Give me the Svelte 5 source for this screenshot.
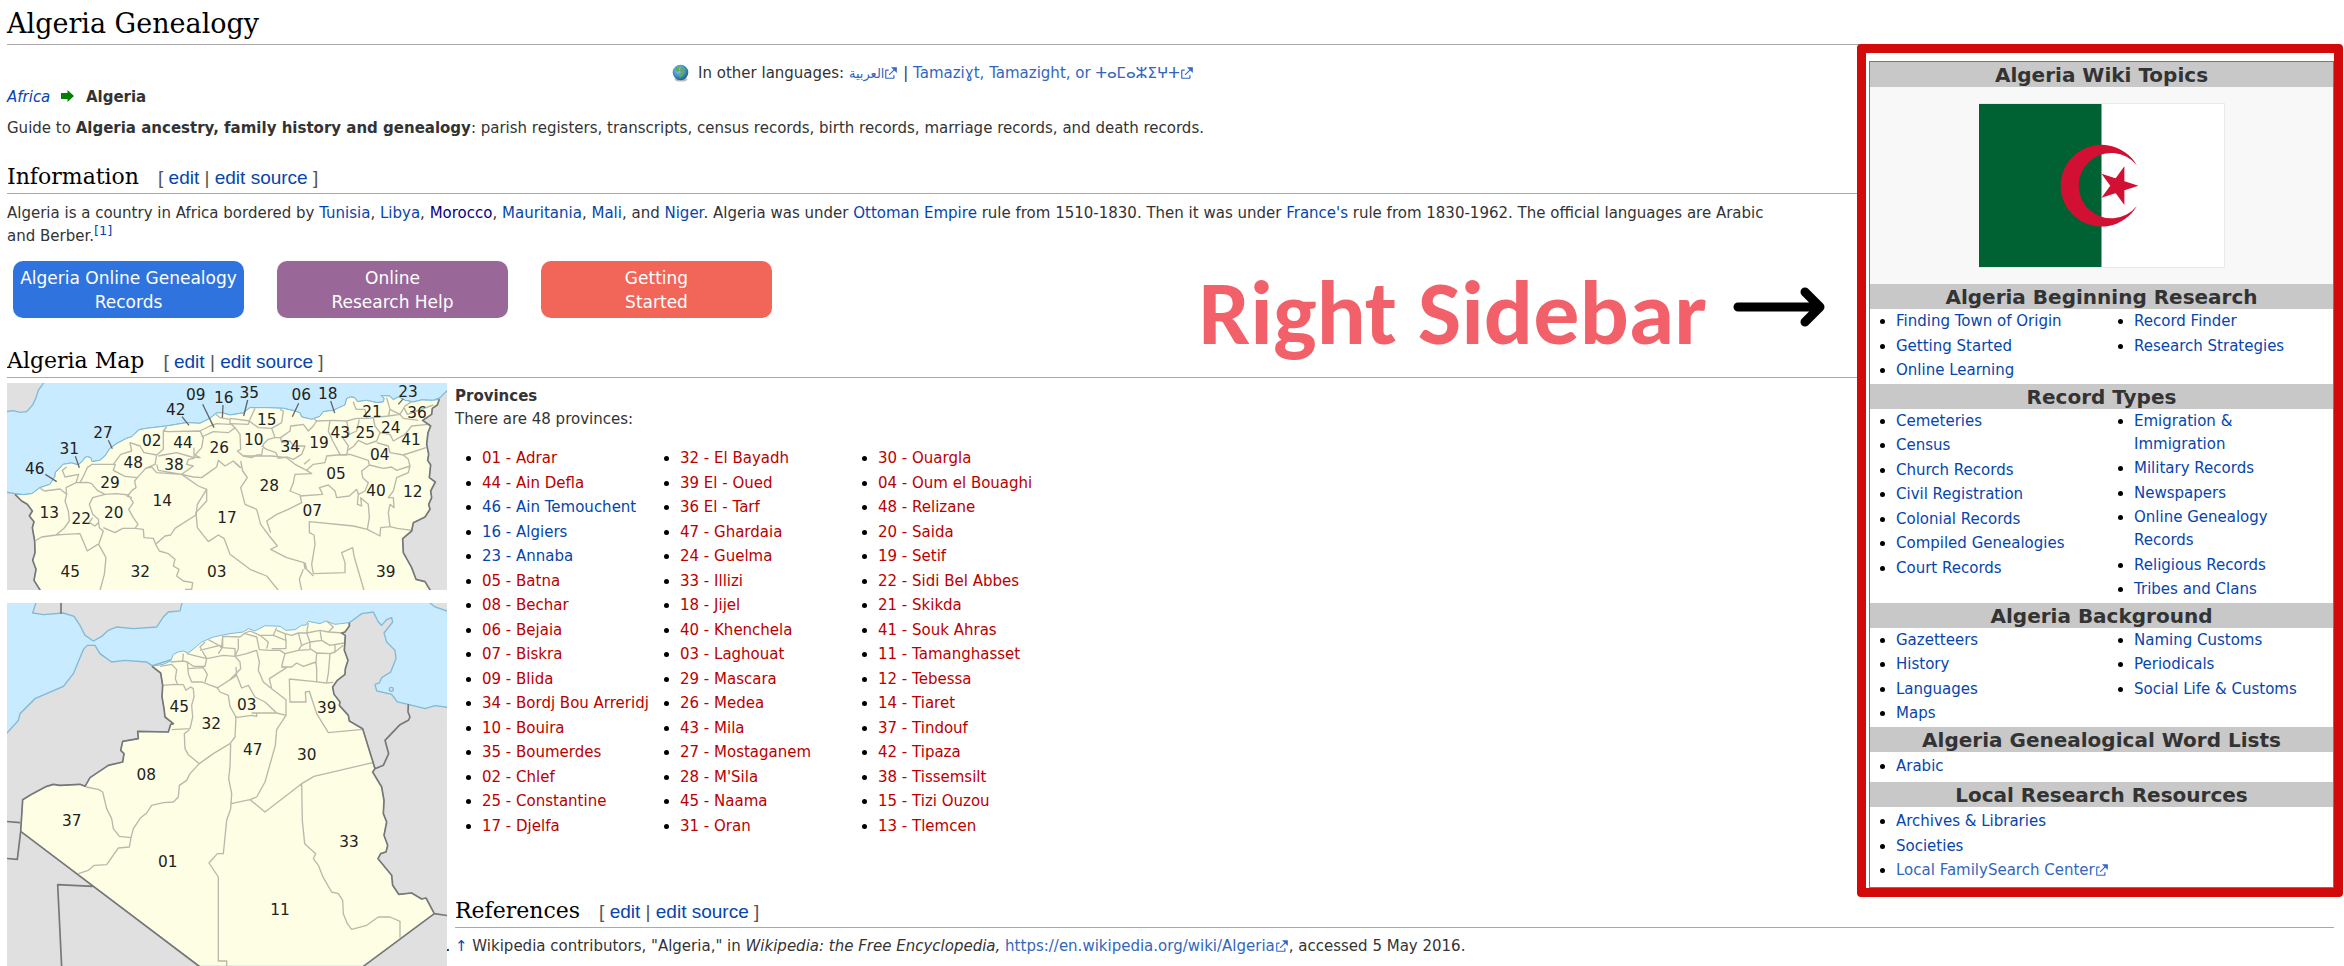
<script lang="ts">
  type Item = { label: string; external?: boolean };
  type Topic = { title: string; columns: Item[][] };

  const items = (...labels: string[]): Item[] => labels.map((label) => ({ label }));

  const topics: Topic[] = [
    {
      title: 'Algeria Beginning Research',
      columns: [
        items('Finding Town of Origin', 'Getting Started', 'Online Learning'),
        items('Record Finder', 'Research Strategies')
      ]
    },
    {
      title: 'Record Types',
      columns: [
        items('Cemeteries', 'Census', 'Church Records', 'Civil Registration', 'Colonial Records', 'Compiled Genealogies', 'Court Records'),
        items('Emigration & Immigration', 'Military Records', 'Newspapers', 'Online Genealogy Records', 'Religious Records', 'Tribes and Clans')
      ]
    },
    {
      title: 'Algeria Background',
      columns: [
        items('Gazetteers', 'History', 'Languages', 'Maps'),
        items('Naming Customs', 'Periodicals', 'Social Life & Customs')
      ]
    },
    { title: 'Algeria Genealogical Word Lists', columns: [items('Arabic')] },
    {
      title: 'Local Research Resources',
      columns: [[...items('Archives & Libraries', 'Societies'), { label: 'Local FamilySearch Center', external: true }]]
    }
  ];

  const provinces = [
    ['01 - Adrar', '44 - Ain Defla', '46 - Ain Temouchent', '16 - Algiers', '23 - Annaba', '05 - Batna', '08 - Bechar', '06 - Bejaia', '07 - Biskra', '09 - Blida', '34 - Bordj Bou Arreridj', '10 - Bouira', '35 - Boumerdes', '02 - Chlef', '25 - Constantine', '17 - Djelfa'],
    ['32 - El Bayadh', '39 El - Oued', '36 El - Tarf', '47 - Ghardaia', '24 - Guelma', '33 - Illizi', '18 - Jijel', '40 - Khenchela', '03 - Laghouat', '29 - Mascara', '26 - Medea', '43 - Mila', '27 - Mostaganem', "28 - M'Sila", '45 - Naama', '31 - Oran'],
    ['30 - Ouargla', '04 - Oum el Bouaghi', '48 - Relizane', '20 - Saida', '19 - Setif', '22 - Sidi Bel Abbes', '21 - Skikda', '41 - Souk Ahras', '11 - Tamanghasset', '12 - Tebessa', '14 - Tiaret', '37 - Tindouf', '42 - Tipaza', '38 - Tissemsilt', '15 - Tizi Ouzou', '13 - Tlemcen']
  ];

  // provinces that already have a page
  const existing = ['46 - Ain Temouchent', '16 - Algiers', '23 - Annaba'];

  type Mark = [string, number, number];

  const northLabels: Mark[] = [
    ['09', 587, 207], ['16', 671, 215], ['35', 748, 200], ['06', 904, 208], ['18', 983, 203], ['23', 1224, 197],
    ['42', 527, 252], ['15', 800, 281], ['21', 1116, 259], ['36', 1251, 260], ['27', 309, 320], ['02', 455, 345],
    ['44', 549, 351], ['26', 658, 367], ['10', 761, 343], ['34', 871, 363], ['19', 957, 351], ['43', 1021, 320],
    ['25', 1096, 322], ['24', 1172, 306], ['41', 1233, 342], ['04', 1139, 388], ['31', 208, 368], ['46', 104, 430],
    ['48', 400, 412], ['38', 522, 417], ['29', 330, 472], ['05', 1008, 443], ['28', 808, 480], ['40', 1128, 495],
    ['12', 1238, 498], ['14', 487, 526], ['13', 148, 562], ['22', 244, 580], ['20', 341, 560], ['07', 937, 554],
    ['17', 681, 575], ['45', 211, 737], ['32', 421, 737], ['03', 650, 737], ['39', 1157, 737]
  ];

  const southLabels: Mark[] = [
    ['45', 538, 364], ['03', 740, 358], ['39', 980, 368], ['32', 634, 415], ['47', 758, 495], ['30', 920, 508],
    ['08', 439, 570], ['37', 215, 708], ['33', 1047, 770], ['01', 503, 830], ['11', 840, 975]
  ];
</script>

{#snippet externalIcon()}
  <svg class="external-icon" viewBox="0 0 12 12" aria-hidden="true">
    <path d="M6 1h5v5L8.86 3.85 4.7 8 4 7.3l4.15-4.16zM2 3h2v1H2v6h6V8h1v2a1 1 0 0 1-1 1H2a1 1 0 0 1-1-1V4a1 1 0 0 1 1-1" />
  </svg>
{/snippet}

{#snippet sectionHeading(title: string)}
  <h2>
    {title}
    <span class="edit">[ <a href="#edit">edit</a> | <a href="#source">edit source</a> ]</span>
  </h2>
{/snippet}

{#snippet topicLists(topic: Topic)}
  <h3>{topic.title}</h3>
  <div class="topic-lists" class:two={topic.columns.length > 1}>
    {#each topic.columns as column}
      <ul>
        {#each column as item}
          <li>
            <a href="#topic" class:external={item.external}>{item.label}{#if item.external}{@render externalIcon()}{/if}</a>
          </li>
        {/each}
      </ul>
    {/each}
  </div>
{/snippet}

<div class="page">
  <h1>Algeria Genealogy</h1>

  <aside>
    <h3>Algeria Wiki Topics</h3>
    <div class="flag">
      <svg viewBox="0 0 900 600" role="img" aria-label="Flag of Algeria">
        <path fill="#fff" d="M0 0h900v600H0z" />
        <path fill="#006233" d="M0 0h450v600H0z" />
        <path fill="#d21034" d="M579.9 225a150 150 0 1 0 0 150 120 120 0 1 1 0-150M585.6 300 450 255.9 534 371.1V228.9L450 344.1z" />
      </svg>
    </div>
    {#each topics as topic}
      {@render topicLists(topic)}
    {/each}
    <div class="highlight"></div>
  </aside>

  <p class="languages">
    <svg class="globe" viewBox="0 0 17 18" aria-hidden="true">
      <defs>
        <radialGradient id="sea" cx="0.4" cy="0.35" r="0.7">
          <stop offset="0" stop-color="#8fd0ee" />
          <stop offset="0.6" stop-color="#3b8fc0" />
          <stop offset="1" stop-color="#23566f" />
        </radialGradient>
      </defs>
      <ellipse cx="9" cy="15.5" rx="6.5" ry="2" fill="#bbb" />
      <circle cx="8.5" cy="8.5" r="7.8" fill="url(#sea)" />
      <path fill="#62a868" d="M3 5c1-2 3-3 5-3l-1 3 1 2-3 1zM9 3l3 1 1 3-2 4-3 3-1-3 2-2-1-3z" />
    </svg>
    In other languages:
    <a href="#ar" class="external arabic"><bdi>العربية</bdi>{@render externalIcon()}</a>
    |
    <a href="#ber" class="external">Tamaziɣt, Tamazight, or ⵜⴰⵎⴰⵣⵉⵖⵜ{@render externalIcon()}</a>
  </p>

  <p class="crumbs">
    <a href="#africa"><i>Africa</i></a>
    <svg viewBox="0 0 13 12" aria-hidden="true"><path fill="#008000" d="M0 3h6.500V0L13 6l-6.500 6V9H0z" /></svg>
    <b>Algeria</b>
  </p>

  <p class="guide">
    Guide to <b>Algeria ancestry, family history and genealogy</b>: parish registers, transcripts, census records, birth
    records, marriage records, and death records.
  </p>

  {@render sectionHeading('Information')}
  <p class="intro">
    Algeria is a country in Africa bordered by <a href="#tn">Tunisia</a>, <a href="#ly">Libya</a>,
    <a href="#ma" class="visited">Morocco</a>, <a href="#mr">Mauritania</a>, <a href="#ml">Mali</a>, and
    <a href="#ne">Niger</a>. Algeria was under <a href="#ottoman">Ottoman Empire</a> rule from 1510-1830. Then it was
    under <a href="#fr">France's</a> rule from 1830-1962. The official languages are Arabic and Berber.<sup><a href="#cite">[1]</a></sup>
  </p>

  <div class="buttons">
    <button class="blue">Algeria Online Genealogy Records</button>
    <button class="purple">Online<br />Research Help</button>
    <button class="coral">Getting<br />Started</button>
  </div>

  {@render sectionHeading('Algeria Map')}

  <div class="maps">
    <svg viewBox="21 156 1320 622" role="img" aria-label="Northern provinces of Algeria">
      <path class="land" d="M10 145h1350v650H10z" />
      <path
        class="sea"
        d="M135 150 115 178 108 200 98 222 80 242 60 244 40 239 10 243V482L45 488 70 491 96 488 120 470 150 460 165 436 166 425 190 400 215 396 235 402 250 388 254 380 262 377 272 380 276 392 300 388 315 375 330 352 350 338 380 322 395 317 418 296 440 292 500 285 560 275 600 277 630 262 650 246 665 245 690 252 730 246 750 230 800 230 850 232 885 240 900 246 905 258 935 265 960 256 970 242 1000 238 1035 222 1040 203 1052 198 1064 200 1072 212 1100 208 1130 215 1150 213 1153 202 1145 194 1168 195 1180 206 1196 198 1215 208 1240 213 1265 207 1300 208 1320 200 1350 170V150Z"
      />
      <path
        class="algeria"
        d="M45 490 70 491 96 488 120 470 150 460 165 436 166 425 190 400 215 396 235 402 250 388 254 380 262 377 272 380 276 392 300 388 315 375 330 352 350 338 380 322 395 317 418 296 440 292 500 285 560 275 600 277 630 262 650 246 665 245 690 252 730 246 750 230 800 230 850 232 885 240 900 246 905 258 935 265 960 256 970 242 1000 238 1035 222 1040 203 1052 198 1064 200 1072 212 1100 208 1130 215 1150 213 1153 202 1145 194 1168 195 1180 206 1196 198 1215 208 1240 213 1265 207 1300 208 1318 205 1312 222 1297 232 1295 250 1268 268 1292 285 1284 305 1280 340 1286 370 1283 388 1292 402 1288 440 1306 453 1292 480 1295 500 1286 520 1290 535 1275 558 1240 575 1235 600 1208 623 1210 665 1235 710 1248 745 1275 752 1292 780H122L102 748 108 715 98 688 105 665 104 630 97 590 102 572 88 555 97 540 82 520 65 510Z"
      />
      <g class="province">
        <path d="M121 472 133 480 180 474 200 490 195 510 205 540 208 570 192 592 168 612 125 618 108 628M168 612 195 610 240 608 262 660 298 637M200 490 198 470 228 455 236 430 195 438 187 418 200 408M228 455 262 454 275 458 292 478 315 490 350 488 385 492 396 478 408 470 404 450 412 440 375 436 340 418 346 400 316 400 276 400 262 410 248 440 240 455M315 490 278 500 268 520 278 550 295 565 298 590 310 600 296 640 318 680 313 730 300 778M278 560 268 575 285 585 295 575" />
        <path d="M396 500 380 495M385 492 400 515 386 535 400 560 414 580 405 592 368 592 345 605 310 590M405 592 430 595 432 620 460 622 467 640 495 615 512 612 525 592 588 552 592 520 620 475 595 465 545 430 470 425 455 408 437 412 412 440M340 400 362 370 395 360 390 335 420 345 432 365 470 372 490 355 490 300 500 288M437 412 465 400 470 372 M490 300 505 302 600 300 610 320 605 350 585 372 600 380 575 378 530 365 490 372 475 375M470 400 475 418 545 430 580 438 605 440 630 422 650 408 655 388 675 405 700 390 722 410" />
        <path d="M545 430 580 405 560 400 565 385 582 382 582 350M600 300 630 285 650 278 690 280 690 265 660 260 648 250M605 318 640 302 685 305 705 290 720 310 722 355 712 360 730 375 755 380 770 372 785 372M705 290 692 278 745 280 750 265 765 232M690 262 750 270M750 272 775 290 815 292 845 275 850 240 840 235M815 292 825 320 805 325 790 340 785 372M825 320 842 320 870 300 872 285 898 282 910 280 925 300 940 285 950 270 940 262M842 320 845 335 870 330 880 345 915 345 905 370 880 385 862 378 835 382 828 365 800 355 785 345" />
        <path d="M722 390 728 420 742 440 722 470 735 520 770 535 782 580 808 615 832 645 812 655 860 680 912 695 915 715M705 395 722 410M620 475 620 510 588 545 592 590 625 632 655 612 672 622 690 670 750 715 800 735 835 778M467 640 478 660 505 668 525 685 520 705 537 715 530 735 550 750 578 755 575 775 555 775M728 375 780 375 815 375 860 380 885 400 920 418 935 428 885 430 880 455 870 480 900 492 905 515 865 535 830 550 800 570 812 605M950 270 1000 268 1040 270 1048 310 1028 320 1045 345 1040 372 1010 372 980 375 975 395 940 400 920 418M912 400 930 385M990 268 985 300 998 330 1020 370M1040 270 1070 262 1100 262 1095 235 1068 235 1060 212M1100 262 1165 255 1170 235 1160 200M1165 255 1200 250 1210 262 1255 268M1200 250 1215 225 1235 212M1170 235 1200 250M1212 230 1222 250 1300 222M1120 262 1125 285 1140 305 1130 330 1100 340 1075 328 1062 345 1040 360M1140 305 1170 310 1180 330 1215 310 1235 285 1285 280M1130 335 1165 345 1170 365 1210 372 1278 350M1048 310 1070 300 1078 265M1010 372 1050 370 1105 388 1108 402 1150 412 1175 408 1190 418 1230 405 1225 385 1210 372M1108 402 1085 420 1088 440 1105 455 1095 480 1075 490 1070 475 1048 495 1010 500 1005 480 985 462 958 470 968 490 900 495M1075 490 1072 520 1085 525 1082 500 1105 520 1108 560 1102 595 1140 615 1142 590 1170 587 1165 545 1170 520 1182 530 1180 500 1165 500 1180 480 1190 440 1225 425 1230 405M1170 587 1192 592 1235 598M1102 595 1060 585 928 572 928 605 942 612 945 640 935 700 940 728 1035 725 1035 695 1025 665 1058 650 1062 675 1092 778M915 695 920 715 940 735M910 715 898 745 905 778" />
      </g>
      <path class="border" d="M45 490 65 510 82 520 97 540 88 555 102 572 97 590 104 630 105 665 98 688 108 715 102 748 122 780M1318 205 1312 222 1297 232 1295 250 1268 268 1292 285 1284 305 1280 340 1286 370 1283 388 1292 402 1288 440 1306 453 1292 480 1295 500 1286 520 1290 535 1275 558 1240 575 1235 600 1208 623 1210 665 1235 710 1248 745 1275 752 1292 780" />
      <path class="leader" d="M608 220 642 290M669 222 667 260M743 207 731 255M896 217 877 257M992 210 1004 246M1210 203 1195 220M546 257 567 283M325 328 337 353M226 376 238 410M136 430 170 452" />
      {#each northLabels as [label, x, y]}
        <text {x} {y}>{label}</text>
      {/each}
    </svg>
    <svg viewBox="21 38 1320 1090" role="img" aria-label="Provinces of Algeria">
      <path class="sea" d="M10 28h1350v1120H10z" />
      <path class="land" d="M110 30 98 68 130 73 190 68 222 78 240 105 255 135 280 152 305 138 325 120 350 110 400 115 470 110 490 80 505 65 540 62 548 30ZM1280 30 1305 50 1350 65V30Z" />
      <path
        class="land"
        d="M10 440 55 390 60 370 105 325 190 288 220 250 250 178 262 165 285 165 300 190 335 215 375 210 440 215 456 226 700 150 1000 130 1048 97 1085 70 1120 65 1135 95 1145 105 1160 88 1175 82 1178 95 1152 128 1160 155 1185 180 1188 205 1172 245 1145 262 1138 278 1125 282 1130 302 1175 312 1192 335 1225 342 1275 355 1305 346 1350 352V1140H10Z"
      />
      <circle class="land" cx="1174" cy="297" r="6" />
      <path
        class="algeria"
        d="M456 228 490 222 512 212 520 192 535 185 550 182 565 188 590 168 605 155 640 140 690 130 730 125 745 115 765 122 795 106 840 108 858 120 885 118 905 105 918 104 925 93 960 100 978 92 1005 102 1048 97 1048 107 1035 125 1025 128 1036 135 1033 180 1044 210 1036 235 1035 252 1012 270 998 290 1002 312 1020 335 1018 345 1045 375 1048 392 1088 415 1125 535 1118 545 1145 590 1152 630 1150 670 1160 695 1152 735 1163 765 1158 785 1142 790 1134 805 1175 855 1178 885 1196 912 1235 908 1265 926 1278 923 1303 970 1090 1128H600L62 723 68 628 95 612 140 588 160 582 180 585 240 582 255 588 270 562 325 525 368 515 372 490 362 480 368 453 415 445 413 423 505 425 512 402 520 400 495 380 492 355 486 320 488 285 482 248Z"
      />
      <g class="province">
        <path d="M488 285 525 282 550 283 558 300 572 290 580 295 582 320 575 345 578 380 570 415 515 418M568 418 553 430 555 475 565 493 598 520 570 550 560 570 538 585 535 620 520 635 490 637 455 645 440 668 422 682 400 715 393 742 358 738 340 715 335 685 320 655 308 605 295 597 258 590M393 742 388 770 355 773 320 823 283 825 265 840 235 850M598 520 640 490 690 460 705 440 708 380 690 348 685 315 660 305 652 293 710 255M705 382 755 375 770 378 770 368 830 368 858 375 858 328 815 295M755 368 830 368 795 335 765 320 745 285 725 293 710 255 708 230M858 375 830 418 826 465 795 575 770 620 750 628 693 640M692 460 690 530 686 565 695 610 692 655 680 690 675 740 670 790 652 790 627 818 655 860 655 1112 680 1112 680 1128M750 628 795 665 905 580 942 558 1118 517M905 580 907 690 914 760 947 790 940 805 955 825 970 862 995 905 1015 910 1028 930 1030 970 1042 1000 1055 1017 1100 1005 1135 980 1170 980 1200 993 1200 1042M868 266 870 335 918 335 916 305 928 303 950 370 985 427 1088 417M868 266 945 274 978 278 1000 276" />
        <path d="M480 228 515 222 530 238 526 265 532 280M512 215 548 212 562 215 565 250 575 275 605 275 632 285 655 293M548 212 550 190M562 215 580 228 615 228 620 205 670 195 705 198 720 215 722 235 690 268M565 235 610 232 622 252 615 275M560 190 620 205 600 170 615 155M600 180 632 172 660 165 665 175 655 190M625 148 665 170 668 138 720 140 735 128 750 122M668 140 668 172 705 175 705 198 740 190 770 180 778 215 775 240 790 275 815 295M715 145 715 175 705 198M750 122 780 135 820 135 830 112M735 130 770 140 778 178 810 180 840 180 855 190 848 215 845 230 860 232 808 265 815 295M780 135 805 155 800 175M820 135 858 150 858 175 815 175M830 120 855 130 875 135 895 128 905 165 895 180 855 190M855 130 858 150M895 128 920 128 930 155 905 165M920 128 925 98M920 128 960 120 985 125 1000 110 980 92M960 120 965 150 930 155M985 125 1030 128M965 150 990 165 1032 158M930 155 930 175 950 188 948 215 910 228 890 218 875 230 850 230M895 180 930 178M950 188 990 190 1005 185 1005 165M990 190 985 250 980 276M948 215 950 235 950 274M1005 185 1030 165" />
      </g>
      <path
        class="border"
        d="M456 228 482 248 488 285 486 320 492 355 495 380 520 400 512 402 505 425 413 423 415 445 368 453 362 480 372 490 368 515 325 525 270 562 255 588 240 582 180 585 160 582 140 588 95 612 68 628 62 723 600 1130M1048 97 1048 107 1035 125 1025 128 1036 135 1033 180 1044 210 1036 235 1035 252 1012 270 998 290 1002 312 1020 335 1018 345 1045 375 1048 392 1088 415 1125 535 1118 545 1145 590 1152 630 1150 670 1160 695 1152 735 1163 765 1158 785 1142 790 1134 805 1175 855 1178 885 1196 912 1235 908 1265 926 1278 923 1303 970 1090 1128M1303 970 1345 976M1225 342 1224 365 1230 380 1225 390 1200 403 1155 450 1166 490 1150 525 1125 535M183 38V70M15 693 60 697M62 723 52 807 15 804M278 888 173 883 185 1130"
      />
      {#each southLabels as [label, x, y]}
        <text {x} {y}>{label}</text>
      {/each}
    </svg>
  </div>

  <div class="provinces">
    <p><b>Provinces</b><br />There are 48 provinces:</p>
    <div class="province-lists">
      {#each provinces as column}
        <ul>
          {#each column as name}
            <li><a href="#province" class:missing={!existing.includes(name)}>{name}</a></li>
          {/each}
        </ul>
      {/each}
    </div>
  </div>

  {@render sectionHeading('References')}
  <ol>
    <li>
      <a href="#back">↑</a> Wikipedia contributors, "Algeria," in <i>Wikipedia: the Free Encyclopedia,</i>
      <a href="https://en.wikipedia.org/wiki/Algeria" class="external">https://en.wikipedia.org/wiki/Algeria{@render externalIcon()}</a>, accessed 5 May 2016.
    </li>
  </ol>

  <div class="callout">
    <span>Right Sidebar</span>
    <svg viewBox="0 0 92 40" aria-hidden="true">
      <path d="M5 20H86M72 5 87 20 72 35" fill="none" stroke="#000" stroke-width="9" stroke-linecap="round" stroke-linejoin="round" />
    </svg>
  </div>
</div>

<style>
  :global(body) {
    background: #fff;
  }

  .page {
    position: relative;
    padding: 4px 10px 0 7px;
    overflow: hidden;
    color: #333;
    font-family: Verdana, 'DejaVu Sans', sans-serif;
    font-size: 15px;
    line-height: 23px;
  }

  h1,
  h2 {
    margin: 0;
    border-bottom: 1px solid #aaa;
    color: #000;
    font-family: 'DejaVu Serif', serif;
    font-weight: 400;
  }

  h1 {
    font-size: 27px;
    line-height: 40px;
  }

  h2 {
    overflow: hidden;
    font-size: 22px;
    line-height: 30px;
  }

  .edit {
    margin-left: 12px;
    color: #555;
    font-family: 'Liberation Sans', Arial, sans-serif;
    font-size: 19px;
  }

  p,
  ul,
  ol {
    margin: 0;
  }

  a {
    color: #0645ad;
    text-decoration: none;
  }

  a:hover {
    text-decoration: underline;
  }

  a.visited {
    color: #0b0080;
  }

  a.missing {
    color: #ba0000;
  }

  a.external {
    color: #36b;
  }

  .external-icon {
    width: 14px;
    height: 14px;
    fill: #36c;
    vertical-align: -2px;
  }

  ul {
    padding-left: 27px;
  }

  li {
    margin-bottom: 0.1em;
  }

  li::marker {
    color: #000;
  }

  /* Topics box */
  aside {
    position: relative;
    float: right;
    width: 463px;
    margin: 16px 0 8px 10px;
    border: 1px solid #777;
    background: #fff;
  }

  h3 {
    margin: 0;
    padding-top: 2px;
    background: #c8c8c8;
    font-size: 20px;
    line-height: 23px;
    text-align: center;
  }

  .flag {
    padding: 16px 0;
    background: #f8f8f8;
    text-align: center;
  }

  .flag svg {
    display: block;
    width: 245px;
    margin: 0 auto;
    border: 1px solid #eaeaea;
    border-left: 0;
  }

  aside ul {
    padding-left: 26px;
  }

  .topic-lists {
    padding: 3px 0;
  }

  .topic-lists.two {
    display: grid;
    grid-template-columns: 238px 1fr;
    padding: 1px 12px 0 0;
  }

  .highlight {
    position: absolute;
    inset: -18px -10px -10px -13px;
    border: 9px solid #d20a0a;
    border-radius: 4px;
    pointer-events: none;
  }

  /* Lead */
  .languages {
    padding-top: 17px;
    text-align: center;
  }

  .globe {
    width: 17px;
    height: 18px;
    margin-right: 4px;
    vertical-align: -4px;
  }

  .arabic {
    font-size: 13px;
  }

  .crumbs {
    margin-top: 1px;
  }

  .crumbs svg {
    width: 13px;
    height: 12px;
    margin: 0 7px 0 6px;
  }

  .guide {
    margin: 8px 0 22px;
  }

  .intro {
    display: flow-root;
    margin-top: 8px;
    padding-right: 80px;
  }

  sup {
    font-size: 13px;
    line-height: 0;
  }

  .buttons {
    display: flex;
    gap: 33px;
    margin: 13px 0 28px 6px;
  }

  button {
    width: 231px;
    padding: 5px 4px 4px;
    border: 0;
    border-radius: 10px;
    color: #fff;
    font: inherit;
    font-size: 17px;
    line-height: 24px;
    cursor: pointer;
  }

  .blue {
    background: #2f73de;
  }

  .purple {
    background: #9a6799;
  }

  .coral {
    background: #f26659;
  }

  /* Maps */
  .maps {
    position: relative;
    z-index: 1;
    display: grid;
    gap: 13px;
    float: left;
    width: 440px;
    margin: 5px 8px 0 0;
  }

  .maps svg {
    display: block;
    width: 100%;
  }

  .maps text {
    fill: #222;
    font-family: 'DejaVu Sans', sans-serif;
    font-size: 46px;
    text-anchor: middle;
  }

  .land {
    fill: #e0e0e0;
    stroke: #7fbad8;
    stroke-width: 4;
  }

  .sea {
    fill: #c8ebff;
    stroke: #7fbad8;
    stroke-width: 4;
  }

  .algeria {
    fill: #fefee4;
    stroke: #7fbad8;
    stroke-width: 3;
  }

  .province {
    fill: none;
    stroke: #b8b8ab;
    stroke-width: 4;
    stroke-linejoin: round;
  }

  .border {
    fill: none;
    stroke: #777;
    stroke-width: 5;
    stroke-linejoin: round;
  }

  .leader {
    stroke: #666;
    stroke-width: 4;
  }

  .provinces {
    margin-bottom: 57px;
    padding-top: 7px;
  }

  .province-lists {
    display: flex;
    padding-top: 16px;
  }

  .province-lists ul {
    flex: 0 0 171px;
    white-space: nowrap;
  }

  ol {
    padding: 7px 0 0;
  }

  /* Pointer to the topics box */
  .callout {
    position: absolute;
    top: 251px;
    right: 519px;
    display: flex;
    align-items: center;
    gap: 26px;
    color: #f2616a;
    font-family: Calibri, Carlito, Lato, sans-serif;
    font-size: 92px;
    font-weight: 700;
    line-height: 100px;
  }

  .callout span {
    padding-top: 12px;
  }

  .callout svg {
    width: 92px;
    height: 40px;
  }
</style>
